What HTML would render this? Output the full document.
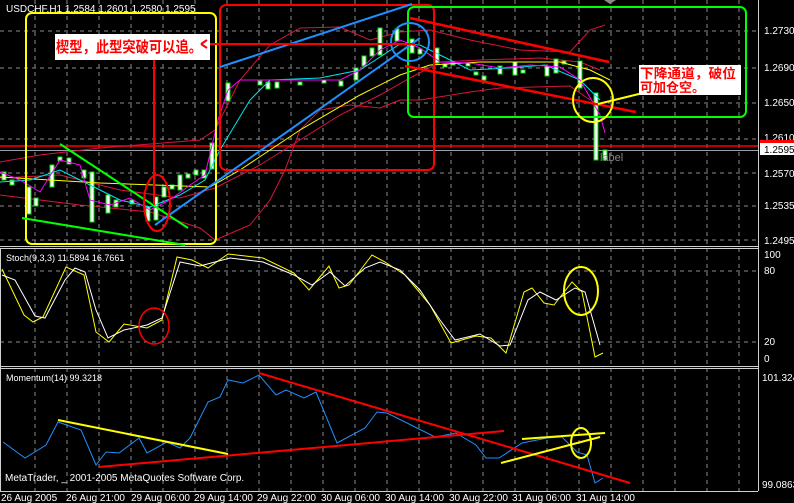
<!DOCTYPE html>
<html><head><meta charset="utf-8"><style>
html,body{margin:0;padding:0;background:#000;}
svg{display:block}
text{font-family:"Liberation Sans","Noto Sans CJK SC",sans-serif;}
</style></head><body>
<svg width="794" height="503" viewBox="0 0 794 503" xmlns="http://www.w3.org/2000/svg">
<rect width="794" height="503" fill="#000"/>
<g stroke="#8a8a8a" stroke-width="1" stroke-dasharray="4,4" fill="none">
<path d="M0 31H758M0 68H758M0 103H758M0 139H758M0 173H758M0 206H758M0 240H758"/>
<path d="M0 271H758M0 342H758"/>
<path d="M35 0V491M67 0V491M99 0V491M131 0V491M163 0V491M195 0V491M227 0V491M259 0V491M291 0V491M323 0V491M355 0V491M387 0V491M419 0V491M451 0V491M483 0V491M515 0V491M547 0V491M579 0V491M611 0V491M643 0V491M675 0V491M707 0V491M739 0V491"/>
</g>
<g stroke="#d0d0d0" stroke-width="1" fill="none">
<path d="M758.5 0V491M0 246.5H758M0 248.5H758M0 366.5H758M0 368.5H758M0 491.5H758M0.5 248V491"/>
</g>
<path d="M0 146H758" stroke="#ff0000" stroke-width="1.5"/>
<path d="M0 150.5H758" stroke="#9aa0a8" stroke-width="1"/>
<g fill="none" stroke="#d8143c" stroke-width="1">
<polyline points="0,162 40,155 100,148 200,140 215,130 240,80 270,45 300,28 340,27 370,40 400,32 430,30 470,40 520,50 570,52 590,30 605,25"/>
<polyline points="0,195 40,200 80,205 150,212 200,228 215,240 250,225 270,200 285,170 300,130 320,110 350,105 380,108 400,100 420,100 470,92 500,88 570,86 590,100"/>
<polyline points="0,178 60,175 120,190 180,198 215,188 260,165 300,140 340,115 380,95 410,78 440,62 480,60 540,58 580,62 600,70"/>
</g>
<g stroke="#00e000" stroke-width="1" fill="#fff">
<rect x="2" y="172" width="4" height="8"/><rect x="10" y="180" width="4" height="5"/><rect x="27" y="187" width="4" height="27"/>
<rect x="34" y="198" width="4" height="8"/><rect x="50" y="165" width="4" height="22"/><rect x="58" y="157" width="4" height="4"/>
<rect x="67" y="158" width="4" height="6"/><rect x="82" y="170" width="4" height="8"/><rect x="90" y="172" width="4" height="50"/>
<rect x="106" y="195" width="4" height="18"/><rect x="114" y="200" width="4" height="7"/><rect x="130" y="200" width="4" height="4"/>
<rect x="146" y="207" width="4" height="14"/><rect x="154" y="197" width="4" height="23"/><rect x="162" y="187" width="4" height="10"/>
<rect x="170" y="185" width="4" height="4"/><rect x="178" y="175" width="4" height="15"/><rect x="186" y="174" width="4" height="4"/>
<rect x="194" y="170" width="4" height="5"/><rect x="202" y="170" width="4" height="8"/><rect x="210" y="143" width="4" height="26"/>
<rect x="226" y="83" width="4" height="18"/><rect x="258" y="81" width="4" height="4"/><rect x="266" y="82" width="4" height="7"/>
<rect x="275" y="82" width="4" height="6"/><rect x="298" y="82" width="4" height="3"/><rect x="322" y="80" width="4" height="3"/>
<rect x="339" y="81" width="4" height="5"/><rect x="354" y="68" width="4" height="12"/><rect x="362" y="56" width="4" height="10"/>
<rect x="370" y="48" width="4" height="8"/><rect x="378" y="28" width="4" height="27"/><rect x="395" y="29" width="4" height="12"/>
<rect x="410" y="39" width="4" height="14"/><rect x="418" y="49" width="4" height="5"/><rect x="435" y="48" width="4" height="15"/>
<rect x="443" y="64" width="4" height="3"/><rect x="451" y="62" width="4" height="3"/><rect x="466" y="63" width="4" height="3"/>
<rect x="474" y="72" width="4" height="3"/><rect x="482" y="76" width="4" height="4"/><rect x="498" y="66" width="4" height="8"/>
<rect x="513" y="62" width="4" height="13"/><rect x="521" y="70" width="4" height="3"/><rect x="545" y="66" width="4" height="10"/>
<rect x="554" y="59" width="4" height="14"/><rect x="562" y="61" width="4" height="3"/><rect x="578" y="61" width="4" height="27"/>
<rect x="594" y="93" width="4" height="67"/><rect x="603" y="150" width="4" height="10"/>
</g>
<polyline fill="none" stroke="#ffff00" stroke-width="1" points="0,177 100,183 210,187 240,170 300,130 360,95 400,75 430,65 480,62 560,62 590,70 610,80"/>
<polyline fill="none" stroke="#00e5ee" stroke-width="1" points="0,182 30,180 60,170 90,185 120,200 150,207 180,195 205,180 220,150 250,100 270,80 320,78 360,70 380,57 400,44 420,45 440,55 470,70 510,68 545,65 580,80 600,100"/>
<polyline fill="none" stroke="#ff00ff" stroke-width="1" points="0,172 20,180 40,192 60,160 80,165 90,200 110,205 130,198 150,210 170,200 190,185 205,175 218,120 228,90 240,80 260,80 300,80 340,80 360,70 380,50 400,40 420,48 440,62 470,63 500,68 530,65 560,67 580,80 600,115 605,133"/>
<rect x="26" y="13" width="190" height="231" rx="6" fill="none" stroke="#ffff00" stroke-width="2"/>
<rect x="220" y="5" width="214" height="165" rx="6" fill="none" stroke="#ff0000" stroke-width="2"/>
<rect x="408" y="7" width="338" height="110" rx="6" fill="none" stroke="#00ff00" stroke-width="2"/>
<g stroke="#00ff00" stroke-width="2"><line x1="60" y1="144" x2="188" y2="228"/><line x1="22" y1="218" x2="185" y2="245"/></g>
<g stroke="#1e90ff" stroke-width="2" fill="none"><line x1="220" y1="67" x2="412" y2="4"/><line x1="155" y1="225" x2="420" y2="38"/><circle cx="410" cy="42" r="19"/></g>
<g stroke="#ff0000" stroke-width="2.5"><line x1="410" y1="18" x2="609" y2="62"/><line x1="405" y1="66" x2="636" y2="112"/></g>
<path d="M203 44H415" stroke="#ff0000" stroke-width="2"/>
<path d="M154 205V52M148 58L154 50L160 58" stroke="#ff0000" stroke-width="2" fill="none"/>
<ellipse cx="157" cy="203" rx="13" ry="28" fill="none" stroke="#ff0000" stroke-width="2"/>
<rect x="55" y="34" width="155" height="26" fill="#fff"/>
<text x="56" y="52" font-size="15" font-weight="bold" fill="#ff0000" textLength="146" lengthAdjust="spacingAndGlyphs">楔型，此型突破可以追。</text>
<path d="M201 44l6 -4M201 44l6 4" stroke="#ff0000" stroke-width="2"/>
<ellipse cx="593" cy="100" rx="20" ry="22" fill="none" stroke="#ffff00" stroke-width="2"/>
<line x1="647" y1="92" x2="598" y2="104" stroke="#ffff00" stroke-width="2"/>
<rect x="639" y="65" width="102" height="30" fill="#fff"/>
<text x="640" y="78" font-size="13" font-weight="bold" fill="#ff0000" textLength="96" lengthAdjust="spacingAndGlyphs">下降通道，破位</text>
<text x="640" y="92" font-size="13" font-weight="bold" fill="#ff0000">可加仓空。</text>
<text x="600" y="161" font-size="11" fill="#888">label</text>
<path d="M604 0l6 4 6-4z" fill="#888"/>
<text x="6" y="12" font-size="10" fill="#fff">USDCHF,H1  1.2584 1.2601 1.2580 1.2595</text>
<g font-size="10" fill="#fff">
<text x="764" y="34">1.2730</text><text x="764" y="71">1.2690</text><text x="764" y="106">1.2650</text>
<text x="764" y="141">1.2610</text><text x="764" y="177">1.2570</text><text x="764" y="209">1.2535</text><text x="764" y="244">1.2495</text>
<text x="764" y="258">100</text><text x="764" y="274">80</text><text x="764" y="345">20</text><text x="764" y="362">0</text>
<text x="762" y="381">101.324</text><text x="762" y="488">99.0863</text>
</g>
<rect x="760" y="140" width="34" height="3" fill="#ff0000"/>
<rect x="760" y="143" width="34" height="12" fill="#fff"/>
<text x="764" y="153" font-size="10" fill="#000">1.2595</text>
<text x="6" y="261" font-size="9" fill="#fff">Stoch(9,3,3) 11.5894 16.7661</text>
<polyline fill="none" stroke="#ffff00" stroke-width="1" points="2,269 24,315 33,322 43,317 66,267 84,275 96,332 109,342 124,324 147,328 162,320 177,257 192,260 208,268 228,254 263,258 294,273 309,290 329,266 339,288 349,285 372,255 385,262 405,275 430,305 451,343 476,336 491,338 506,353 524,292 532,288 544,303 554,305 572,282 582,292 595,357 603,353"/>
<polyline fill="none" stroke="#fff" stroke-width="1" points="2,275 15,280 35,316 45,318 65,280 75,268 85,272 96,310 108,338 124,330 147,325 162,318 180,262 200,266 230,258 263,262 294,275 312,285 330,272 345,286 365,268 380,262 400,270 420,290 440,320 455,340 480,334 500,346 510,345 528,300 540,292 556,300 575,288 585,292 600,345"/>
<ellipse cx="154" cy="326" rx="15" ry="18" fill="none" stroke="#ff0000" stroke-width="1.5"/>
<ellipse cx="581" cy="291" rx="17" ry="24" fill="none" stroke="#ffff00" stroke-width="2"/>
<text x="6" y="381" font-size="9" fill="#fff">Momentum(14) 99.3218</text>
<polyline fill="none" stroke="#1e90ff" stroke-width="1" points="3,442 25,458 46,445 58,422 81,430 96,465 106,452 119,453 139,438 147,453 167,442 180,448 190,438 208,402 220,397 228,380 243,383 259,375 276,395 286,390 304,398 316,392 337,443 365,428 377,412 387,413 415,427 435,437 456,433 476,445 486,458 499,458 522,443 547,438 562,437 577,452 587,455 595,483 603,478"/>
<g stroke-width="2">
<line x1="259" y1="373" x2="630" y2="483" stroke="#ff0000"/>
<line x1="99" y1="467" x2="504" y2="431" stroke="#ff0000"/>
<line x1="58" y1="420" x2="228" y2="454" stroke="#ffff00"/>
<line x1="501" y1="463" x2="600" y2="437" stroke="#ffff00"/>
<line x1="522" y1="439" x2="605" y2="433" stroke="#ffff00"/>
</g>
<ellipse cx="581" cy="443" rx="10" ry="15" fill="none" stroke="#ffff00" stroke-width="2"/>
<text x="5" y="481" font-size="10" fill="#fff">MetaTrader, _ 2001-2005 MetaQuotes Software Corp.</text>
<g font-size="10" fill="#fff">
<text x="1" y="501">26 Aug 2005</text><text x="66" y="501">26 Aug 21:00</text><text x="131" y="501">29 Aug 06:00</text>
<text x="194" y="501">29 Aug 14:00</text><text x="257" y="501">29 Aug 22:00</text><text x="321" y="501">30 Aug 06:00</text>
<text x="385" y="501">30 Aug 14:00</text><text x="449" y="501">30 Aug 22:00</text><text x="512" y="501">31 Aug 06:00</text>
<text x="576" y="501">31 Aug 14:00</text>
</g>
</svg>
</body></html>
